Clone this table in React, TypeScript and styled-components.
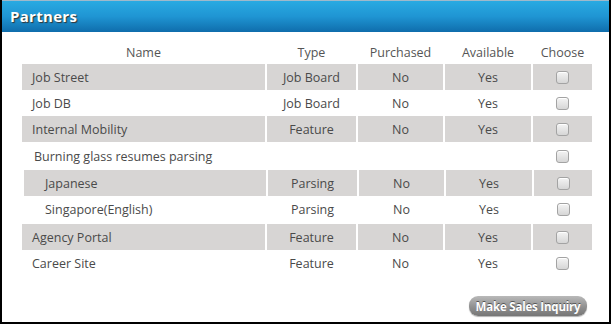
import React from "react";
import styled, { createGlobalStyle } from "styled-components";

const Global = createGlobalStyle`
  html, body { margin: 0; padding: 0; background: #000; }
  body { font-family: "Open Sans", "Liberation Sans", sans-serif; }
`;

const Panel = styled.div`
  width: 607px;
  height: 321px;
  margin: 0 2px;
  background: #fff;
  border-top: 1px solid #9fb9cb;
  display: flex;
  flex-direction: column;
`;

const Header = styled.div`
  height: 31px;
  background: linear-gradient(#29aae2, #1f95d3 50%, #0f6dac);
  display: flex;
  align-items: center;
  padding-left: 8px;
  color: #fff;
  font-weight: bold;
  font-size: 15px;
  letter-spacing: 0.3px;
  text-shadow: 1px 1px 1px #333;
  box-sizing: border-box;
  padding-bottom: 2px;
`;

const Body = styled.div`
  display: flex;
  flex-direction: column;
  padding: 8px 0 0 18px;
  flex: 1;
`;

const Grid = styled.div`
  display: flex;
  flex-direction: column;
  color: #4a4a4a;
  font-size: 12.5px;
`;

const Row = styled.div<{ $h?: number; $sub?: boolean }>`
  display: grid;
  grid-template-columns: ${(p) => (p.$sub ? "242px 89px 85px 86px 58px" : "243px 89px 85px 86px 59px")};
  column-gap: 2px;
  height: ${(p) => p.$h ?? 26}px;
  margin-left: ${(p) => (p.$sub ? 4 : 2)}px;
`;

const Cell = styled.div<{ $shade?: boolean; $center?: boolean; $pad?: number }>`
  display: flex;
  align-items: center;
  justify-content: ${(p) => (p.$center ? "center" : "flex-start")};
  padding-left: ${(p) => p.$pad ?? 0}px;
  background: ${(p) => (p.$shade ? "#d7d5d4" : "transparent")};
  white-space: nowrap;
`;

const HeadCell = styled(Cell)`
  color: #555;
`;

const SubGroup = styled.div`
  display: flex;
  flex-direction: column;
  margin-bottom: 2px;
`;

const Check = styled.span`
  width: 11px;
  height: 11px;
  border: 1px solid #a3a3a3;
  border-radius: 3px;
  background: linear-gradient(#f4f4f4, #d6d6d6);
  box-shadow: inset 0 1px 0 #fff;
`;

const Footer = styled.div`
  display: flex;
  justify-content: flex-end;
  padding: 20px 22px 0 0;
`;

const Button = styled.button`
  width: 118px;
  height: 20px;
  border: none;
  border-radius: 9px;
  background: linear-gradient(#b9b9b9, #8d8d8d 60%, #767676);
  color: #fff;
  font-family: "Open Sans", "Liberation Sans", sans-serif;
  font-size: 11.5px;
  font-weight: 700;
  letter-spacing: -0.2px;
  text-shadow: 0 -1px 0 #555;
  padding: 0;
  box-shadow: 0 1px 1px rgba(0,0,0,0.3);
`;

type Item = { name: string; type: string; shade: boolean };

const top: Item[] = [
  { name: "Job Street", type: "Job Board", shade: true },
  { name: "Job DB", type: "Job Board", shade: false },
  { name: "Internal Mobility", type: "Feature", shade: true },
];
const subs: Item[] = [
  { name: "Japanese", type: "Parsing", shade: true },
  { name: "Singapore(English)", type: "Parsing", shade: false },
];
const bottom: Item[] = [
  { name: "Agency Portal", type: "Feature", shade: true },
  { name: "Career Site", type: "Feature", shade: false },
];

const DataRow = ({ item, sub }: { item: Item; sub?: boolean }) => (
  <Row $sub={sub}>
    <Cell $shade={item.shade} $pad={sub ? 21 : 10}>{item.name}</Cell>
    <Cell $shade={item.shade} $center>{item.type}</Cell>
    <Cell $shade={item.shade} $center>No</Cell>
    <Cell $shade={item.shade} $center>Yes</Cell>
    <Cell $shade={item.shade} $center><Check /></Cell>
  </Row>
);

export default function App() {
  return (
    <>
      <Global />
      <Panel>
        <Header>Partners</Header>
        <Body>
          <Grid>
            <Row $h={24}>
              <HeadCell $center>Name</HeadCell>
              <HeadCell $center>Type</HeadCell>
              <HeadCell $center>Purchased</HeadCell>
              <HeadCell $center>Available</HeadCell>
              <HeadCell $center>Choose</HeadCell>
            </Row>
            {top.map((it) => <DataRow key={it.name} item={it} />)}
            <Row $h={28}>
              <Cell $pad={12}>Burning glass resumes parsing</Cell>
              <Cell />
              <Cell />
              <Cell />
              <Cell $center><Check /></Cell>
            </Row>
            <SubGroup>
              {subs.map((it) => <DataRow key={it.name} item={it} sub />)}
            </SubGroup>
            {bottom.map((it) => <DataRow key={it.name} item={it} />)}
          </Grid>
          <Footer>
            <Button>Make Sales Inquiry</Button>
          </Footer>
        </Body>
      </Panel>
    </>
  );
}
